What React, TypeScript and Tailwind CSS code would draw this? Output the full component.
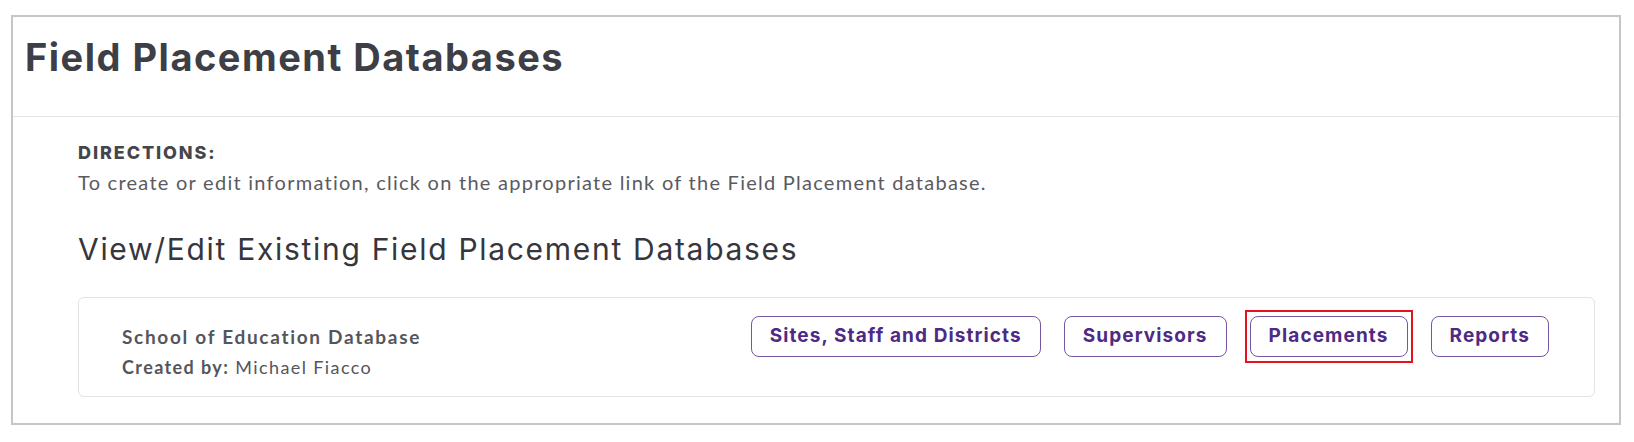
import { Fragment } from 'react';

const sans = "font-['Inter','Noto_Sans',sans-serif]";
const lato = "font-['Lato','Noto_Sans',sans-serif]";

const links = ['Sites, Staff and Districts', 'Supervisors', 'Placements', 'Reports'];

function LinkButton({ label, flagged }: { label: string; flagged?: boolean }) {
  return (
    <div className="relative">
      <button
        className={`${sans} h-[41px] rounded-lg border-[1.5px] border-[#7656a3] bg-white px-[18px] text-[19px] font-bold tracking-[1.1px] text-[#4e2a84]`}
      >
        {label}
      </button>
      {flagged && (
        <span className="pointer-events-none absolute -inset-x-[5px] -inset-y-[6px] border-2 border-[#e5131d]" />
      )}
    </div>
  );
}

export default function App() {
  return (
    <div className="h-[442px] w-[1634px] bg-white pt-[15px] pl-[11px]">
      <div className="h-[410px] w-[1610px] border-2 border-[#c6c6c6] bg-white">
        <header className="h-[100px] border-b border-[#e4e4e4] pl-[12px] pt-[18px]">
          <h1 className={`${sans} text-[38px] leading-[44px] font-bold tracking-[1.5px] text-[#3d3e46]`}>
            Field Placement Databases
          </h1>
        </header>

        <section className="pl-[65px] pr-[24px] pt-[24px]">
          <p className={`${sans} text-[18px] leading-[24px] font-extrabold tracking-[1.9px] text-[#45464d]`}>
            DIRECTIONS:
          </p>
          <p className={`${lato} mt-[5px] text-[20px] leading-[24px] tracking-[1.26px] text-[#5a5a5f]`}>
            To create or edit information, click on the appropriate link of the Field Placement database.
          </p>

          <h2 className={`${sans} mt-[37px] text-[30px] leading-[36px] font-normal tracking-[1.7px] text-[#36363c]`}>
            View/Edit Existing Field Placement Databases
          </h2>

          <div className="mt-[30px] flex h-[100px] items-start justify-between rounded-md border border-[#e3e3e3] pl-[43px] pr-[45px]">
            <div className={`${lato} pt-[26px] text-[#55555c]`}>
              <div className="text-[19px] leading-[26px] font-bold tracking-[1.7px]">School of Education Database</div>
              <div className="mt-[4px] text-[18px] leading-[26px] tracking-[1.4px]">
                <span className="font-bold">Created by:</span> Michael Fiacco
              </div>
            </div>
            <div className="flex gap-[23px] pt-[18px]">
              {links.map((l) => (
                <Fragment key={l}>
                  <LinkButton label={l} flagged={l === 'Placements'} />
                </Fragment>
              ))}
            </div>
          </div>
        </section>
      </div>
    </div>
  );
}
